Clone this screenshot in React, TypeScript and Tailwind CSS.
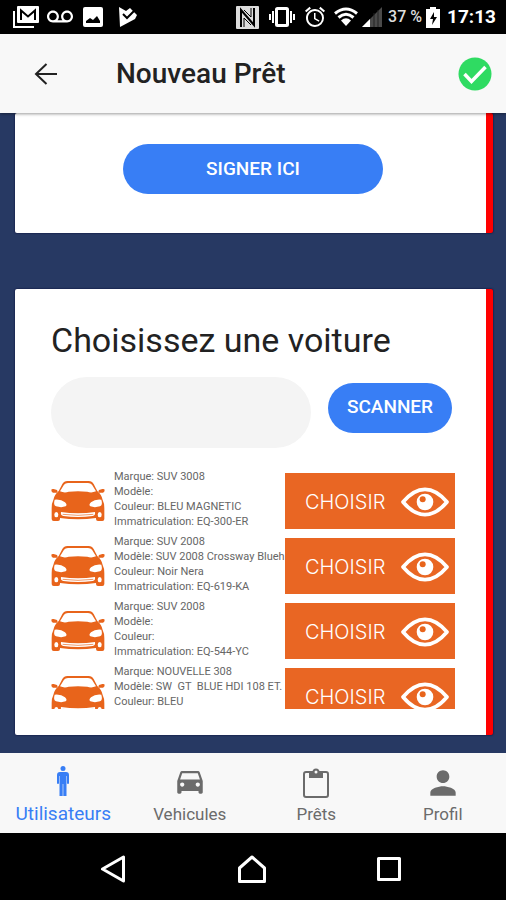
import type { ReactNode } from 'react'
import { MdAccessAlarm, MdDirectionsCar, MdPerson, MdVoicemail } from 'react-icons/md'

const cars = [
  { marque: 'SUV 3008', modele: '', couleur: 'BLEU MAGNETIC', immat: 'EQ-300-ER' },
  { marque: 'SUV 2008', modele: 'SUV 2008 Crossway Blueh', couleur: 'Noir Nera', immat: 'EQ-619-KA' },
  { marque: 'SUV 2008', modele: '', couleur: '', immat: 'EQ-544-YC' },
  { marque: 'NOUVELLE 308', modele: 'SW  GT  BLUE HDI 108 ET.', couleur: 'BLEU', immat: null },
]

function StatusBar() {
  return (
    <div className="h-[34px] shrink-0 bg-black text-white flex items-center justify-between pl-[13px] pr-[10px]">
      <div className="flex items-center">
        <svg className="w-[26px] h-[22px]" viewBox="0 0 26 22" fill="none">
          <path d="M1 5v16h20" stroke="#fff" strokeWidth="2" />
          <rect x="4" y="0" width="22" height="17" rx="1" fill="#fff" />
          <path d="M8 14V4.500l7 6 7-6V14" stroke="#000" strokeWidth="2" />
        </svg>
        <MdVoicemail className="w-[26px] h-[26px] ml-2" />
        <svg className="w-5 h-5 ml-[10px]" viewBox="0 0 20 20">
          <rect width="20" height="20" rx="2" fill="#fff" />
          <path d="M3 16v-2l4-3 3 2 4-4 3 5v2z" fill="#000" />
        </svg>
        <svg className="w-[18px] h-5 ml-4" viewBox="0 0 18 20">
          <path d="M0 0l7 4 4-3 7 7-2 4L1 20z" fill="#fff" />
          <path d="M4 7l4 4 7-7" stroke="#000" strokeWidth="2" fill="none" />
        </svg>
      </div>
      <div className="flex items-center">
        <svg className="w-[23px] h-[23px]" viewBox="0 0 23 23">
          <rect width="23" height="23" rx="1" fill="#ddd" />
          <path d="M5 21V4l13 15V2" stroke="#000" strokeWidth="2" fill="none" />
          <path d="M8 21V12l7 7M15 2v9L8 4" stroke="#000" strokeWidth="1" fill="none" />
        </svg>
        <svg className="w-[26px] h-5 ml-[10px]" viewBox="0 0 26 20" fill="none" stroke="#fff" strokeWidth="2">
          <rect x="7.500" y="1.500" width="11" height="17" rx="1" strokeWidth="3" />
          <path d="M4 4v12M1 7v6M22 4v12M25 7v6" />
        </svg>
        <MdAccessAlarm className="w-6 h-6 ml-2" />
        <svg className="w-6 h-5 ml-[7px]" viewBox="0 0 24 20" fill="none" stroke="#fff" strokeWidth="3">
          <path d="M1 6.500Q12-2.500 23 6.500M4.500 10.500Q12 4 19.500 10.500" />
          <path d="M7 13.500Q12 9 17 13.500L12 19z" fill="#fff" stroke="none" />
        </svg>
        <svg className="w-5 h-5 ml-1" viewBox="0 0 20 20">
          <path d="M20 0v20H0z" fill="#4a4a4a" />
          <path d="M8 12v8H0z" fill="#fff" />
          <path d="M12 6v14M16 3v17" stroke="#222" />
        </svg>
        <span className="ml-[6px] text-base font-medium text-[#ddd] whitespace-nowrap">37 %</span>
        <svg className="w-[14px] h-[21px] ml-1" viewBox="0 0 14 21">
          <path d="M4 0h6v2h4v19H0V2h4z" fill="#fff" />
          <path d="M8 5l-4 7h3l-1 6 5-8H8z" fill="#000" />
        </svg>
        <span className="ml-[7px] text-[19px] font-bold">17:13</span>
      </div>
    </div>
  )
}

function Header() {
  return (
    <header className="relative z-10 h-[79px] shrink-0 bg-[#f8f8f8] flex items-center pl-[34px] pr-[14px] shadow-[0_1px_3px_rgba(0,0,0,0.4)]">
      <button type="button" aria-label="Retour" className="text-[#222]">
        <svg className="w-6 h-6" viewBox="0 0 24 24" fill="none" stroke="currentColor" strokeWidth="2">
          <path d="M12.500 2L2 12l10.500 10M2 12h21" />
        </svg>
      </button>
      <h1 className="ml-[58px] flex-1 text-[28px] font-medium text-[#222]">Nouveau Prêt</h1>
      <button type="button" aria-label="Valider">
        <svg className="w-[34px] h-[34px]" viewBox="0 0 34 34">
          <circle cx="17" cy="17" r="16.500" fill="#2fdb62" />
          <path d="M6.500 17l7 7.500L27.500 10" stroke="#fff" strokeWidth="3.500" fill="none" />
        </svg>
      </button>
    </header>
  )
}

function Card({ children, className }: { children: ReactNode; className: string }) {
  return (
    <section
      className={`ml-[15px] mr-[13px] bg-white border-r-[7px] border-[#ff0000] rounded-[2px] pl-9 pr-[31px] shadow-[0_0_2px_#000030] ${className}`}
    >
      {children}
    </section>
  )
}

function CarIcon() {
  return (
    <svg className="w-[54px] h-10 shrink-0" viewBox="0 0 160 120" fill="#e8641b">
      <path d="M18 38L33 9Q38 0 48 0H112Q122 0 127 9L142 38z" />
      <path d="M0 27q0-4 7-3l10 3q4 5 0 8H5q-5-1-5-8zM160 27q0-4-7-3l-10 3q-4 5 0 8h12q5-1 5-8z" />
      <path d="M22 31H138Q151 41 154 57Q159 66 159 82V114Q159 120 153 120H140Q134 120 134 114V111Q80 119 26 111V114Q26 120 20 120H7Q1 120 1 114V82Q1 66 6 57Q9 41 22 31z" />
      <path
        fill="#fff"
        d="M26 31L38 11Q42 6 50 6H110Q118 6 122 11L134 31Q120 37 108 32Q80 29 52 32Q40 37 26 31z"
      />
      <path
        fill="#fff"
        d="M10 56Q29 54 41 64Q49 72 43 76Q30 81 14 76Q5 72 10 56zM150 56Q131 54 119 64Q111 72 117 76Q130 81 146 76Q155 72 150 56z"
      />
      <path fill="#fff" d="M29 93Q80 101 131 93Q133 104 124 105Q80 111 36 105Q27 104 29 93z" />
      <path d="M34 100Q80 106 126 100" stroke="#e8641b" strokeWidth="2" fill="none" />
      <ellipse cx="15" cy="101" rx="6" ry="8" fill="#fff" />
      <ellipse cx="145" cy="101" rx="6" ry="8" fill="#fff" />
    </svg>
  )
}

function EyeIcon() {
  return (
    <svg className="w-12 h-[30px]" viewBox="0 0 144 90">
      <path
        d="M6 45Q38 7 72 7T138 45Q106 83 72 83T6 45z"
        fill="none"
        stroke="#fff"
        strokeWidth="11"
        strokeLinejoin="round"
      />
      <circle cx="72" cy="45" r="25" fill="#fff" />
      <circle cx="65" cy="37" r="9" fill="#e8641b" />
    </svg>
  )
}

function CarRow({ car }: { car: (typeof cars)[number] }) {
  return (
    <li className="h-[65px] flex items-center">
      <CarIcon />
      <div className="self-start flex-1 min-w-0 pt-px pl-[9px] whitespace-pre text-[11px] leading-[15px] text-[#666]">
        <p>Marque: {car.marque}</p>
        <p>Modèle: {car.modele}</p>
        <p>Couleur: {car.couleur}</p>
        {car.immat && <p>Immatriculation: {car.immat}</p>}
      </div>
      <button
        type="button"
        className="w-[170px] h-14 shrink-0 bg-[#e96623] flex items-center justify-between pl-5 pr-[6px] pt-[2px] text-xl font-light text-white font-['Inter',sans-serif]"
      >
        CHOISIR
        <EyeIcon />
      </button>
    </li>
  )
}

function ManIcon() {
  return (
    <svg className="w-3 h-[30px]" viewBox="0 0 12 30" fill="currentColor">
      <circle cx="6" cy="2.500" r="2.500" />
      <path d="M3 6h6q3 0 3 3v8q0 1-1 1t-1-1v-7h-.5v20H6.300V18h-.6v12H2.500V10H2v7q0 1-1 1t-1-1V9q0-3 3-3z" />
    </svg>
  )
}

function ClipboardIcon() {
  return (
    <svg className="w-[26px] h-[30px]" viewBox="0 0 26 30" fill="none" stroke="currentColor" strokeWidth="2">
      <rect x="1" y="4" width="24" height="25" rx="2" />
      <path d="M6 4h14v6H6z" fill="currentColor" stroke="none" />
      <circle cx="13" cy="4" r="2.500" fill="#f8f8f8" />
    </svg>
  )
}

function TabBar() {
  return (
    <nav className="h-20 shrink-0 bg-[#f8f8f8] grid grid-cols-4 text-[17px] leading-5 text-[#6b6b6b]">
      <button type="button" className="flex flex-col items-center justify-end gap-2 pb-[9px] text-[19px] text-[#387ef5]">
        <ManIcon />
        Utilisateurs
      </button>
      <button type="button" className="flex flex-col items-center justify-end gap-[6px] pb-[9px]">
        <MdDirectionsCar className="w-[34px] h-[34px]" />
        Vehicules
      </button>
      <button type="button" className="flex flex-col items-center justify-end gap-[6px] pb-[9px]">
        <ClipboardIcon />
        Prêts
      </button>
      <button type="button" className="flex flex-col items-center justify-end gap-[2px] pb-[9px]">
        <MdPerson className="w-[38px] h-[38px]" />
        Profil
      </button>
    </nav>
  )
}

function SystemNav() {
  return (
    <div className="h-[67px] shrink-0 bg-black flex items-center justify-between pl-[99px] pr-[105px] pt-1">
      <button type="button" aria-label="Précédent">
        <svg className="w-7 h-7" viewBox="0 0 28 28" fill="none" stroke="#fff" strokeWidth="3" strokeLinejoin="round">
          <path d="M3.500 14L24.500 2V26z" />
        </svg>
      </button>
      <button type="button" aria-label="Accueil">
        <svg className="w-7 h-7" viewBox="0 0 28 28" fill="none" stroke="#fff" strokeWidth="3" strokeLinejoin="round">
          <path d="M14 2L26.500 13V26.500H1.500V13z" />
        </svg>
      </button>
      <button type="button" aria-label="Applications récentes">
        <svg className="w-6 h-6" viewBox="0 0 24 24" fill="none" stroke="#fff" strokeWidth="3" strokeLinejoin="round">
          <rect x="1.500" y="1.500" width="21" height="21" />
        </svg>
      </button>
    </div>
  )
}

export default function App() {
  return (
    <div className="min-h-screen flex flex-col bg-[#273963] font-['Roboto',sans-serif]">
      <StatusBar />
      <Header />
      <main className="flex-1 pb-[18px]">
        <Card className="flex justify-center pt-[31px] pb-[39px]">
          <button type="button" className="w-[260px] h-[50px] rounded-full bg-[#387ef5] text-white text-[19px] font-medium">
            SIGNER ICI
          </button>
        </Card>
        <Card className="mt-14 pt-[31px] pb-[26px]">
          <h2 className="text-[34px] leading-10 text-[#222]">Choisissez une voiture</h2>
          <div className="mt-[17px] flex items-center gap-[17px]">
            <input
              type="text"
              aria-label="Voiture"
              className="w-[260px] h-[71px] min-w-0 rounded-full bg-[#f4f4f4] px-6 text-lg outline-none"
            />
            <button type="button" className="w-[124px] h-[50px] mb-[10px] rounded-full bg-[#387ef5] text-white text-[19px] font-medium">
              SCANNER
            </button>
          </div>
          <ul className="mt-5 h-[241px] overflow-hidden">
            {cars.map((car, i) => (
              <CarRow key={i} car={car} />
            ))}
          </ul>
        </Card>
      </main>
      <TabBar />
      <SystemNav />
    </div>
  )
}
